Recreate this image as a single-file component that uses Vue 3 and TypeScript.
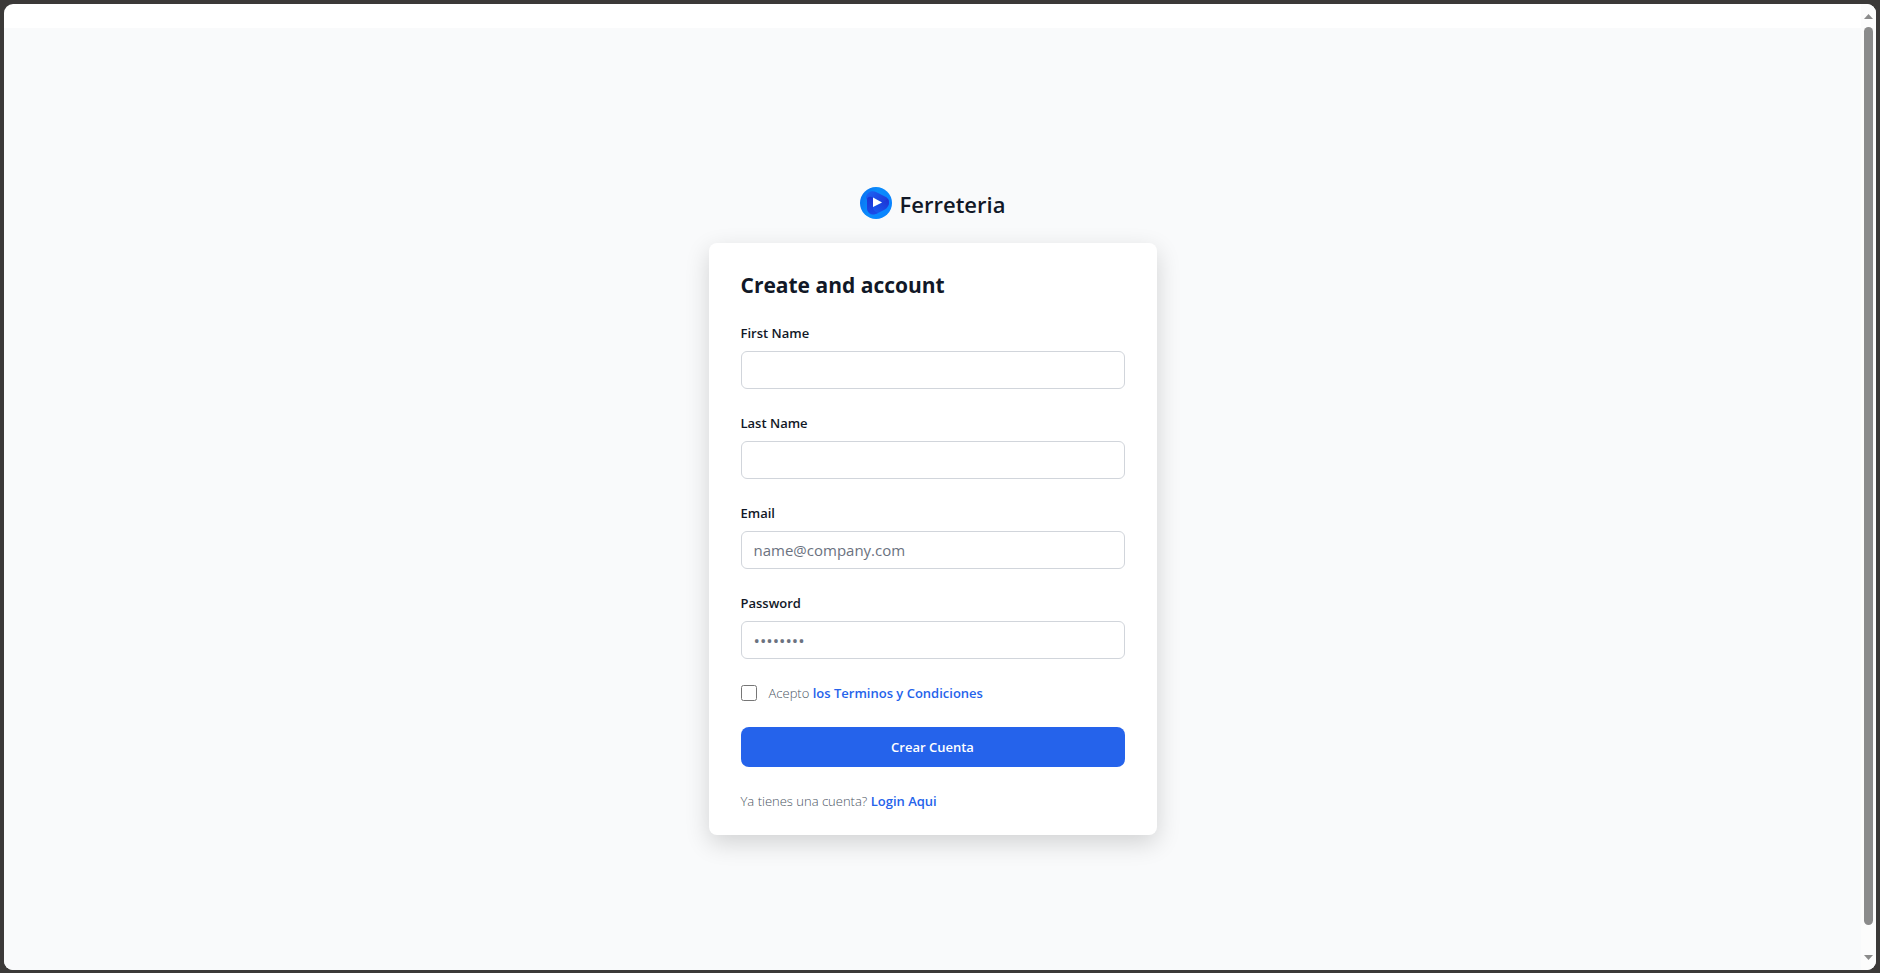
<script setup lang="ts">
import { reactive } from 'vue'

interface Field {
  id: 'firstName' | 'lastName' | 'email' | 'password'
  label: string
  type: string
  placeholder: string
}

const fields: Field[] = [
  { id: 'firstName', label: 'First Name', type: 'text', placeholder: '' },
  { id: 'lastName', label: 'Last Name', type: 'text', placeholder: '' },
  { id: 'email', label: 'Email', type: 'email', placeholder: 'name@company.com' },
  { id: 'password', label: 'Password', type: 'password', placeholder: '••••••••' },
]

const form = reactive({ firstName: '', lastName: '', email: '', password: '', terms: false })
</script>

<template>
  <div class="frame">
    <div class="viewport">
      <div class="page">
        <main class="register">
          <a href="#" class="brand">
            <svg class="logo" viewBox="0 0 32 32" aria-hidden="true">
              <defs>
                <linearGradient id="disc" x1="0" y1="0" x2="1" y2="0.4">
                  <stop offset="0" stop-color="#0a6cf0" />
                  <stop offset="0.5" stop-color="#0a8cfc" />
                  <stop offset="1" stop-color="#0a84ff" />
                </linearGradient>
                <linearGradient id="bandA" x1="0" y1="0" x2="1" y2="0.6">
                  <stop offset="0" stop-color="#1a66f6" />
                  <stop offset="1" stop-color="#1f38d8" />
                </linearGradient>
                <linearGradient id="bandB" x1="1" y1="0" x2="0" y2="1">
                  <stop offset="0" stop-color="#1e30d2" />
                  <stop offset="1" stop-color="#1668f8" />
                </linearGradient>
                <linearGradient id="bandC" x1="0" y1="0" x2="0" y2="1">
                  <stop offset="0" stop-color="#1c34d4" />
                  <stop offset="1" stop-color="#1a4ce8" />
                </linearGradient>
              </defs>
              <circle cx="16" cy="16" r="16" fill="url(#disc)" />
              <path d="M6 11C6 6 11 3 16 5L26 10C29 12 30 15 28 19L13 10.500L7 13Z" fill="url(#bandA)" />
              <path d="M28 12C30 17 28 21 24 23L16 27C12 29 8 27 7 22L13 20L22 15.500Z" fill="url(#bandB)" />
              <path d="M7 13C7 9.500 10 9 13 10.500V20C13 23 15 25 18 26C12 29 7 26 7 21Z" fill="url(#bandC)" />
              <path d="M13 10.500L22 15.500L13 20Z" fill="#fff" />
            </svg>
            <span>Ferreteria</span>
          </a>

          <section class="card">
            <h1>Create and account</h1>
            <form @submit.prevent>
              <div v-for="field in fields" :key="field.id" class="field">
                <label :for="field.id">{{ field.label }}</label>
                <input
                  :id="field.id"
                  v-model="form[field.id]"
                  :type="field.type"
                  :placeholder="field.placeholder"
                  autocomplete="off"
                />
              </div>
              <div class="terms">
                <input id="terms" v-model="form.terms" type="checkbox" />
                <label for="terms">Acepto <a href="#">los Terminos y Condiciones</a></label>
              </div>
              <button type="submit">Crear Cuenta</button>
              <p>Ya tienes una cuenta? <a href="#">Login Aqui</a></p>
            </form>
          </section>
        </main>
      </div>
      <div class="scrollbar" aria-hidden="true">
        <svg viewBox="0 0 9 5"><path d="M0 5L4.500 0L9 5Z" /></svg>
        <div class="track"><div class="thumb"></div></div>
        <svg viewBox="0 0 9 5"><path d="M0 0H9L4.500 5Z" /></svg>
      </div>
    </div>
  </div>
</template>

<style>
body {
  margin: 0;
}
</style>

<style scoped>
.frame,
.frame * {
  box-sizing: border-box;
}

.frame {
  height: 100vh;
  padding: 4px 4px 3px;
  background: #3b3938;
  color: #111827;
  font-family: 'Open Sans', 'Noto Sans', sans-serif;
  font-size: 13px;
  line-height: 20px;
}

.viewport {
  display: flex;
  height: 100%;
  overflow: hidden;
  border-radius: 9px;
  background: #fff;
}

.page {
  flex: 1;
  min-width: 0;
  padding-top: 24px;
  overflow: hidden;
}

.register {
  display: flex;
  flex-direction: column;
  align-items: center;
  justify-content: center;
  min-height: calc(100vh - 7px);
  background: #f9fafb;
}

.brand {
  display: flex;
  align-items: flex-end;
  gap: 8px;
  margin-bottom: 24px;
  color: #111827;
  font-size: 22px;
  font-weight: 600;
  line-height: 30px;
  text-decoration: none;
}

.logo {
  width: 32px;
  height: 32px;
}

.card {
  width: 100%;
  max-width: 448px;
  padding: 26px 32px 24px;
  border-radius: 8px;
  background: #fff;
  box-shadow: 0 8px 24px rgba(0, 0, 0, 0.16);
}

h1 {
  margin: 0 0 22px;
  font-size: 21px;
  font-weight: 700;
  line-height: 32px;
}

form {
  display: flex;
  flex-direction: column;
  gap: 24px;
}

.field {
  display: flex;
  flex-direction: column;
  gap: 8px;
}

.field label {
  font-weight: 600;
}

.field input {
  width: 100%;
  height: 38px;
  padding: 0 12px;
  border: 1px solid #d1d5db;
  border-radius: 6px;
  background: #fff;
  color: #111827;
  font: inherit;
  font-size: 15px;
}

.field input[type='password'] {
  font-size: 17px;
}

.field input::placeholder {
  color: #6b7280;
  opacity: 1;
}

.terms {
  display: flex;
  align-items: center;
  gap: 12px;
  color: #4b5563;
  font-weight: 300;
}

.terms input {
  width: 16px;
  height: 16px;
  margin: 0;
}

form a {
  color: #2563eb;
  font-weight: 600;
  text-decoration: none;
}

button {
  height: 40px;
  padding: 0 20px;
  border: 0;
  border-radius: 8px;
  background: #2563eb;
  color: #fff;
  font: inherit;
  font-weight: 600;
}

p {
  margin: 0;
  color: #4b5563;
  font-weight: 300;
}

.scrollbar {
  display: flex;
  flex-direction: column;
  align-items: center;
  gap: 8px;
  width: 15px;
  padding: 10px 0;
  background: #fcfcfc;
}

.scrollbar svg {
  width: 9px;
  height: 5px;
  fill: #8b8b8b;
}

.track {
  flex: 1;
}

.thumb {
  width: 9px;
  height: calc(100% - 22px);
  border-radius: 5px;
  background: #8b8b8b;
}
</style>
